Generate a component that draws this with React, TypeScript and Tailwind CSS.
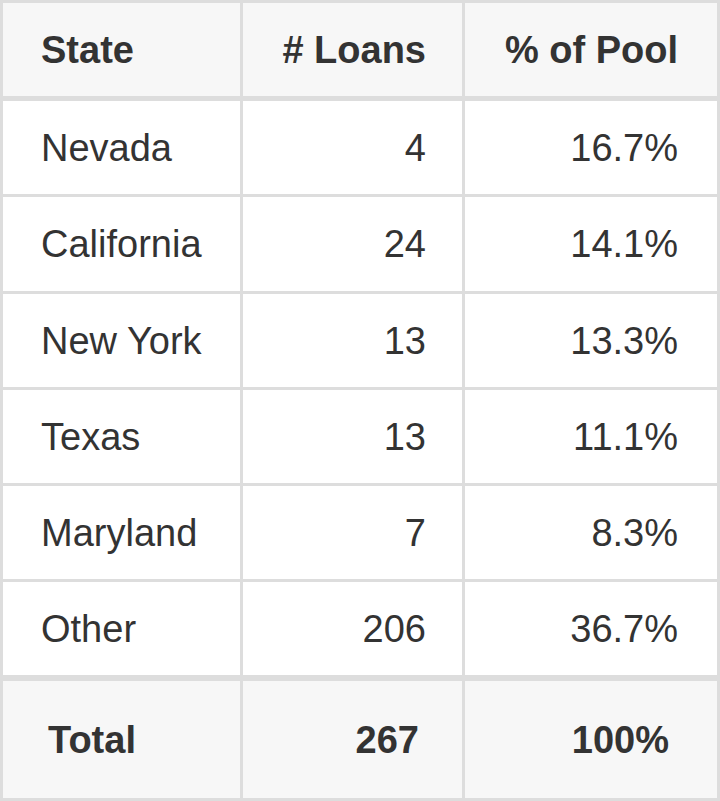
const rows = [
  { state: 'Nevada', loans: '4', pool: '16.7%' },
  { state: 'California', loans: '24', pool: '14.1%' },
  { state: 'New York', loans: '13', pool: '13.3%' },
  { state: 'Texas', loans: '13', pool: '11.1%' },
  { state: 'Maryland', loans: '7', pool: '8.3%' },
  { state: 'Other', loans: '206', pool: '36.7%' },
];

export default function App() {
  return (
    <div className="h-[801px] w-[720px] bg-white font-['Liberation_Sans',Arial,sans-serif] text-[38px] leading-none text-[#333333]">
      <table className="w-[720px] table-fixed border-separate border-spacing-[3px] bg-[#dddddd]">
        <colgroup>
          <col className="w-[237px]" />
          <col className="w-[219px]" />
          <col className="w-[252px]" />
        </colgroup>
        <thead>
          <tr className="h-[95px]">
            <th className="border-b-2 border-[#dddddd] bg-[#f7f7f7] pl-[38px] text-left font-bold">
              State
            </th>
            <th className="border-b-2 border-[#dddddd] bg-[#f7f7f7] pr-[36px] text-right font-bold">
              # Loans
            </th>
            <th className="border-b-2 border-[#dddddd] bg-[#f7f7f7] pr-[39px] text-right font-bold">
              % of Pool
            </th>
          </tr>
        </thead>
        <tbody>
          {rows.map((row, index) => {
            return (
              <tr
                key={index}
                className={index === 1 ? 'h-[94px]' : 'h-[93px]'}
              >
                <td className="bg-white pl-[38px] text-left">{row.state}</td>
                <td className="bg-white pr-[36px] text-right">{row.loans}</td>
                <td className="bg-white pr-[39px] text-right">{row.pool}</td>
              </tr>
            );
          })}
        </tbody>
        <tfoot>
          <tr className="h-[120px]">
            <td className="border-t-[3px] border-[#dddddd] bg-[#f7f7f7] pl-[45px] text-left font-bold">
              Total
            </td>
            <td className="border-t-[3px] border-[#dddddd] bg-[#f7f7f7] pr-[43px] text-right font-bold">
              267
            </td>
            <td className="border-t-[3px] border-[#dddddd] bg-[#f7f7f7] pr-[48px] text-right font-bold">
              100%
            </td>
          </tr>
        </tfoot>
      </table>
    </div>
  );
}
